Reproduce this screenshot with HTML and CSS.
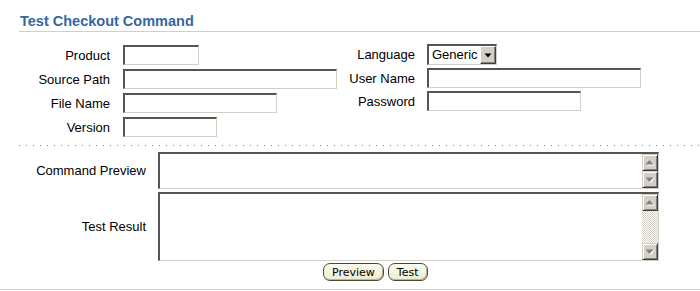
FILE: index.html
```html
<!DOCTYPE html>
<html>
<head>
<meta charset="utf-8">
<title>Test Checkout Command</title>
<link rel="stylesheet" href="styles.css">
</head>
<body>
<div class="page">
  <div class="title-bar"><h1 class="title">Test Checkout Command</h1></div>
  <div class="fields">
    <div class="col col-left">
      <div class="row"><label class="lbl lbl-left">Product</label><input class="txt w76" type="text"></div>
      <div class="row"><label class="lbl lbl-left">Source Path</label><input class="txt w214" type="text"></div>
      <div class="row"><label class="lbl lbl-left">File Name</label><input class="txt w154" type="text"></div>
      <div class="row"><label class="lbl lbl-left">Version</label><input class="txt w94" type="text"></div>
    </div>
    <div class="col col-right">
      <div class="row row-sel"><label class="lbl lbl-right">Language</label>
        <div class="select"><span class="select-val">Generic</span><span class="select-btn"><svg width="8" height="5" viewBox="0 0 8 5"><polygon points="0.5,0.5 7.5,0.5 4,4.5" fill="#000"/></svg></span></div>
      </div>
      <div class="row"><label class="lbl lbl-right">User Name</label><input class="txt w214" type="text"></div>
      <div class="row"><label class="lbl lbl-right">Password</label><input class="txt w154" type="password"></div>
    </div>
  </div>
  <div class="dots"></div>
  <div class="areas">
    <div class="arow arow-small"><label class="lbl lbl-area">Command Preview</label>
      <div class="box">
        <textarea class="ta"></textarea>
        <div class="sbar">
          <div class="sbtn"><svg width="14" height="15" viewBox="0 0 14 15"><polygon points="2.5,9.5 10.5,9.5 6.5,5" fill="#fff" transform="translate(1,1)"/><polygon points="2.5,9.5 10.5,9.5 6.5,5" fill="#808080"/></svg></div>
          <div class="sbtn"><svg width="14" height="15" viewBox="0 0 14 15"><polygon points="2.5,5.5 10.5,5.5 6.5,10" fill="#fff" transform="translate(1,1)"/><polygon points="2.5,5.5 10.5,5.5 6.5,10" fill="#808080"/></svg></div>
        </div>
      </div>
    </div>
    <div class="arow arow-big"><label class="lbl lbl-area">Test Result</label>
      <div class="box">
        <textarea class="ta"></textarea>
        <div class="sbar">
          <div class="sbtn"><svg width="14" height="15" viewBox="0 0 14 15"><polygon points="2.5,9.5 10.5,9.5 6.5,5" fill="#fff" transform="translate(1,1)"/><polygon points="2.5,9.5 10.5,9.5 6.5,5" fill="#808080"/></svg></div>
          <div class="strack"></div>
          <div class="sbtn"><svg width="14" height="15" viewBox="0 0 14 15"><polygon points="2.5,5.5 10.5,5.5 6.5,10" fill="#fff" transform="translate(1,1)"/><polygon points="2.5,5.5 10.5,5.5 6.5,10" fill="#808080"/></svg></div>
        </div>
      </div>
    </div>
  </div>
  <div class="buttons">
    <button class="btn" type="button">Preview</button>
    <button class="btn" type="button">Test</button>
  </div>
  <div class="bottom-line"></div>
</div>
</body>
</html>
```
FILE: styles.css
```css
html, body {
  margin: 0;
  padding: 0;
  background: #ffffff;
}
body {
  font-family: "Liberation Sans", Arial, sans-serif;
  font-size: 13px;
  color: #000;
}
.page {
  width: 700px;
}
.title-bar {
  margin-left: 19px;
  padding-top: 13px;
  padding-bottom: 1px;
  border-bottom: 1px solid #d2d2bc;
}
.title {
  margin: 0;
  padding-left: 1px;
  font-size: 14.5px;
  line-height: 17px;
  font-weight: bold;
  color: #36679f;
}
.fields {
  display: flex;
  height: 105px;
}
.col {
  display: flex;
  flex-direction: column;
}
.col-left {
  padding-top: 13px;
  gap: 4px;
  width: 337px;
}
.col-right {
  padding-top: 12px;
}
.col-right .row + .row {
  margin-top: 3px;
}
.row {
  display: flex;
  align-items: center;
  height: 20px;
}
.row-sel {
  height: 21px;
}
.lbl {
  display: block;
  text-align: right;
  white-space: nowrap;
  line-height: 15px;
}
.lbl-left {
  width: 110px;
  margin-right: 13px;
}
.lbl-right {
  width: 78px;
  margin-right: 12px;
}
.txt {
  box-sizing: border-box;
  height: 20px;
  margin: 0;
  padding: 0 2px;
  border-style: solid;
  border-width: 2px 1px 1px 2px;
  border-color: #555555 #d4d0c8 #d4d0c8 #555555;
  background: #fff;
  font-family: "Liberation Sans", Arial, sans-serif;
  font-size: 13px;
  outline: none;
}
.w76 { width: 76px; }
.w94 { width: 94px; }
.w154 { width: 154px; }
.w214 { width: 214px; }
.select {
  box-sizing: border-box;
  width: 70px;
  height: 21px;
  display: flex;
  align-items: stretch;
  border-style: solid;
  border-width: 2px 1px 1px 2px;
  border-color: #555555 #d4d0c8 #d4d0c8 #555555;
  background: #fff;
}
.select-val {
  flex: 1;
  padding-left: 3px;
  font-size: 13px;
  line-height: 18px;
}
.select-btn {
  box-sizing: border-box;
  width: 16px;
  display: flex;
  align-items: center;
  justify-content: center;
  background: #d4d0c8;
  border-style: solid;
  border-width: 1px;
  border-color: #ffffff #404040 #404040 #ffffff;
  box-shadow: inset -1px -1px 0 #808080;
}
.dots {
  margin-top: 8px;
  margin-left: 19px;
  height: 1px;
  background-image: repeating-linear-gradient(to right, #6a86a8 0, #6a86a8 1px, transparent 1px, transparent 7px);
}
.areas {
  margin-top: 6px;
  display: flex;
  flex-direction: column;
  gap: 3px;
}
.arow {
  display: flex;
  align-items: center;
}
.arow-small .box { height: 37px; }
.arow-big .box { height: 69px; }
.lbl-area {
  width: 146px;
  margin-right: 12px;
}
.box {
  box-sizing: border-box;
  width: 501px;
  display: flex;
  border-style: solid;
  border-width: 2px 1px 1px 2px;
  border-color: #555555 #d4d0c8 #d4d0c8 #555555;
  background: #fff;
}
.ta {
  flex: 1;
  margin: 0;
  padding: 2px;
  border: none;
  resize: none;
  overflow: hidden;
  outline: none;
  font-family: "Liberation Sans", Arial, sans-serif;
  font-size: 13px;
}
.sbar {
  width: 16px;
  display: flex;
  flex-direction: column;
}
.sbtn {
  box-sizing: border-box;
  height: 17px;
  display: flex;
  align-items: center;
  justify-content: center;
  background: #d4d0c8;
  border-style: solid;
  border-width: 1px;
  border-color: #d4d0c8 #404040 #404040 #d4d0c8;
  box-shadow: inset 1px 1px 0 #ffffff, inset -1px -1px 0 #808080;
}
.arow-small .sbtn {
  flex: 1;
}
.strack {
  flex: 1;
  background-color: #ffffff;
  background-image: repeating-conic-gradient(#d4d0c8 0 25%, #ffffff 0 50%);
  background-size: 2px 2px;
}
.buttons {
  margin-top: 2px;
  padding-left: 323px;
  display: flex;
  gap: 4px;
  height: 18px;
}
.btn {
  box-sizing: border-box;
  height: 18px;
  margin: 0;
  padding: 0 8px;
  border: 1px solid #4b4b30;
  border-radius: 7px;
  background: linear-gradient(#fbfbef, #ececd4);
  box-shadow: inset -1px -1px 0 #b8b89a;
  font-family: "DejaVu Sans", Verdana, sans-serif;
  font-size: 11px;
  line-height: 15px;
  color: #000;
}
.bottom-line {
  margin-top: 8px;
  height: 1px;
  background: #d2d2b4;
}
```
